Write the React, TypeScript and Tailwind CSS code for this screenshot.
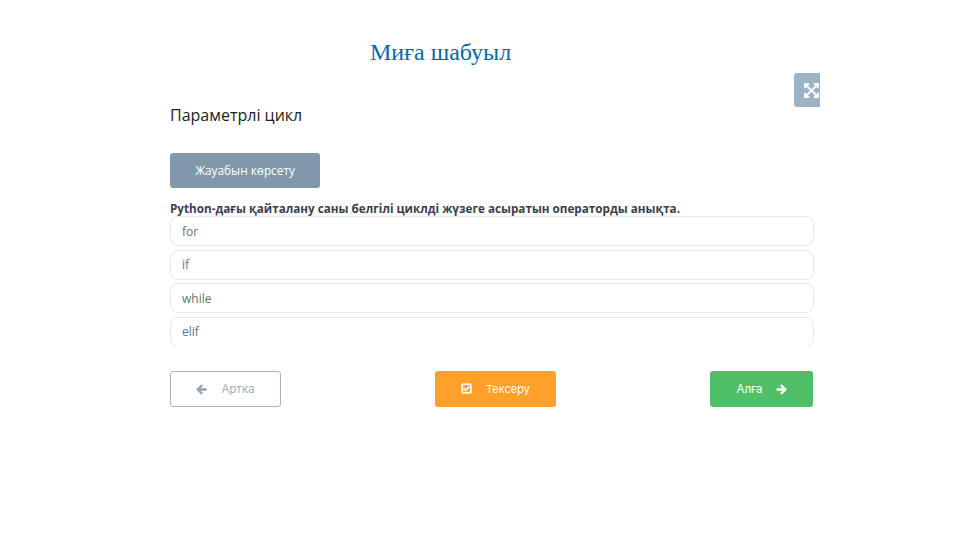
import { FaArrowLeft, FaArrowRight, FaExpandArrowsAlt, FaRegCheckSquare } from "react-icons/fa";

const options = ["for", "if", "while", "elif"];

export default function App() {
  return (
    <div className="relative h-[540px] w-[960px] overflow-hidden bg-white font-['Open_Sans',sans-serif]">
      <div className="pl-[370px] pt-[39px]">
        <h1 className="font-['Liberation_Serif',serif] text-[24px] leading-[26px] text-[#0467a9]">
          Миға шабуыл
        </h1>
      </div>

      <div className="absolute left-[794px] top-[73px] flex h-[34px] w-[26px] items-center justify-start rounded-l-[3px] bg-[#9db2c2] pl-[9px] text-white">
        <FaExpandArrowsAlt className="h-[17px] w-[17px] shrink-0" />
      </div>

      <div className="ml-[170px] mt-[39px] w-[644px]">
        <h2 className="text-[16px] leading-[22px] text-[#222222]">Параметрлі цикл</h2>

        <button className="mt-[27px] flex h-[35px] w-[150px] items-center justify-center rounded-[3px] bg-[#7f99ab] text-[11.8px] font-medium text-white">
          Жауабын көрсету
        </button>

        <p className="mt-[12px] text-[11.7px] font-bold leading-[16px] text-[#3a3f4a]">
          Python-дағы қайталану саны белгілі циклді жүзеге асыратын операторды анықта.
        </p>

        <ul className="flex h-[130px] flex-col gap-[3.5px] overflow-hidden">
          {options.map((option) => (
            <li
              key={option}
              className="flex h-[30px] shrink-0 items-center rounded-[8px] border border-[#e6e8ea] pl-[11px] pt-px text-[12px] text-[#6b7178]"
            >
              {option}
            </li>
          ))}
        </ul>

        <div className="mt-[25px] flex items-center justify-between pr-px">
          <button className="flex h-[36px] w-[111px] items-center justify-center gap-[14px] rounded-[3px] border border-[#a9b4bb] bg-white pt-px font-['Inter',sans-serif] text-[11.5px] text-[#9fb0ba]">
            <FaArrowLeft className="h-[11px] w-[11px] text-[#8fa6b2]" stroke="currentColor" strokeWidth={40} />
            Артка
          </button>
          <button className="flex h-[36px] w-[121px] items-center justify-center gap-[14px] rounded-[3px] bg-[#ffa02b] pt-px font-['Inter',sans-serif] text-[11px] text-white">
            <FaRegCheckSquare className="-mt-[2px] h-[11px] w-[11px]" stroke="currentColor" strokeWidth={30} />
            Тексеру
          </button>
          <button className="flex h-[36px] w-[103px] items-center justify-center gap-[13px] rounded-[3px] bg-[#4fc068] pt-px font-['Inter',sans-serif] text-[11.5px] text-white">
            Алға
            <FaArrowRight className="h-[11px] w-[11px]" stroke="currentColor" strokeWidth={40} />
          </button>
        </div>
      </div>
    </div>
  );
}
